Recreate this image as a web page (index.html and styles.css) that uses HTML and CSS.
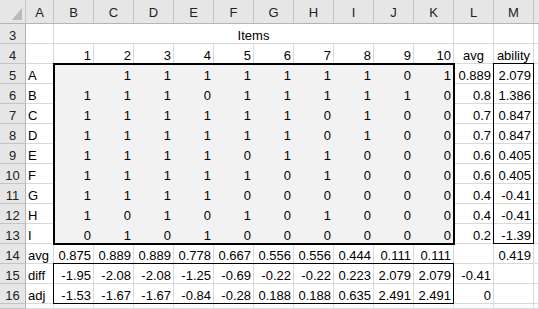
FILE: index.html
```html
<!DOCTYPE html>
<html>
<head>
<meta charset="utf-8">
<link rel="stylesheet" href="styles.css">
</head>
<body>
<div class="sheet">
  <div class="row hdr">
    <div class="corner"><svg class="tri" width="10" height="12" viewBox="0 0 10 12"><polygon points="10,0 10,12 0,12" fill="#b9b9b9"/></svg></div>
    <div class="ch">A</div><div class="ch">B</div><div class="ch">C</div><div class="ch">D</div><div class="ch">E</div><div class="ch">F</div><div class="ch">G</div><div class="ch">H</div><div class="ch">I</div><div class="ch">J</div><div class="ch">K</div><div class="ch">L</div><div class="ch">M</div><div class="ch last"></div>
  </div>
  <div class="row">
    <div class="rh">3</div><div class="c"></div><div class="c merged">Items</div><div class="c"></div><div class="c"></div><div class="c"></div>
  </div>
  <div class="row">
    <div class="rh">4</div><div class="c"></div><div class="c n">1</div><div class="c n">2</div><div class="c n">3</div><div class="c n">4</div><div class="c n">5</div><div class="c n">6</div><div class="c n">7</div><div class="c n">8</div><div class="c n">9</div><div class="c n">10</div><div class="c ctr">avg</div><div class="c ctr">ability</div><div class="c"></div>
  </div>
  <div class="row">
    <div class="rh">5</div><div class="c t">A</div><div class="c f n"></div><div class="c f n">1</div><div class="c f n">1</div><div class="c f n">1</div><div class="c f n">1</div><div class="c f n">1</div><div class="c f n">1</div><div class="c f n">1</div><div class="c f n">0</div><div class="c f n">1</div><div class="c n">0.889</div><div class="c n">2.079</div><div class="c"></div>
  </div>
  <div class="row">
    <div class="rh">6</div><div class="c t">B</div><div class="c f n">1</div><div class="c f n">1</div><div class="c f n">1</div><div class="c f n">0</div><div class="c f n">1</div><div class="c f n">1</div><div class="c f n">1</div><div class="c f n">1</div><div class="c f n">1</div><div class="c f n">0</div><div class="c n">0.8</div><div class="c n">1.386</div><div class="c"></div>
  </div>
  <div class="row">
    <div class="rh">7</div><div class="c t">C</div><div class="c f n">1</div><div class="c f n">1</div><div class="c f n">1</div><div class="c f n">1</div><div class="c f n">1</div><div class="c f n">1</div><div class="c f n">0</div><div class="c f n">1</div><div class="c f n">0</div><div class="c f n">0</div><div class="c n">0.7</div><div class="c n">0.847</div><div class="c"></div>
  </div>
  <div class="row">
    <div class="rh">8</div><div class="c t">D</div><div class="c f n">1</div><div class="c f n">1</div><div class="c f n">1</div><div class="c f n">1</div><div class="c f n">1</div><div class="c f n">1</div><div class="c f n">0</div><div class="c f n">1</div><div class="c f n">0</div><div class="c f n">0</div><div class="c n">0.7</div><div class="c n">0.847</div><div class="c"></div>
  </div>
  <div class="row">
    <div class="rh">9</div><div class="c t">E</div><div class="c f n">1</div><div class="c f n">1</div><div class="c f n">1</div><div class="c f n">1</div><div class="c f n">0</div><div class="c f n">1</div><div class="c f n">1</div><div class="c f n">0</div><div class="c f n">0</div><div class="c f n">0</div><div class="c n">0.6</div><div class="c n">0.405</div><div class="c"></div>
  </div>
  <div class="row">
    <div class="rh">10</div><div class="c t">F</div><div class="c f n">1</div><div class="c f n">1</div><div class="c f n">1</div><div class="c f n">1</div><div class="c f n">1</div><div class="c f n">0</div><div class="c f n">1</div><div class="c f n">0</div><div class="c f n">0</div><div class="c f n">0</div><div class="c n">0.6</div><div class="c n">0.405</div><div class="c"></div>
  </div>
  <div class="row">
    <div class="rh">11</div><div class="c t">G</div><div class="c f n">1</div><div class="c f n">1</div><div class="c f n">1</div><div class="c f n">1</div><div class="c f n">0</div><div class="c f n">0</div><div class="c f n">0</div><div class="c f n">0</div><div class="c f n">0</div><div class="c f n">0</div><div class="c n">0.4</div><div class="c n">-0.41</div><div class="c"></div>
  </div>
  <div class="row">
    <div class="rh">12</div><div class="c t">H</div><div class="c f n">1</div><div class="c f n">0</div><div class="c f n">1</div><div class="c f n">0</div><div class="c f n">1</div><div class="c f n">0</div><div class="c f n">1</div><div class="c f n">0</div><div class="c f n">0</div><div class="c f n">0</div><div class="c n">0.4</div><div class="c n">-0.41</div><div class="c"></div>
  </div>
  <div class="row">
    <div class="rh">13</div><div class="c t">I</div><div class="c f n">0</div><div class="c f n">1</div><div class="c f n">0</div><div class="c f n">1</div><div class="c f n">0</div><div class="c f n">0</div><div class="c f n">0</div><div class="c f n">0</div><div class="c f n">0</div><div class="c f n">0</div><div class="c n">0.2</div><div class="c n">-1.39</div><div class="c"></div>
  </div>
  <div class="row">
    <div class="rh">14</div><div class="c t">avg</div><div class="c n">0.875</div><div class="c n">0.889</div><div class="c n">0.889</div><div class="c n">0.778</div><div class="c n">0.667</div><div class="c n">0.556</div><div class="c n">0.556</div><div class="c n">0.444</div><div class="c n">0.111</div><div class="c n">0.111</div><div class="c"></div><div class="c n">0.419</div><div class="c"></div>
  </div>
  <div class="row">
    <div class="rh">15</div><div class="c t">diff</div><div class="c n">-1.95</div><div class="c n">-2.08</div><div class="c n">-2.08</div><div class="c n">-1.25</div><div class="c n">-0.69</div><div class="c n">-0.22</div><div class="c n">-0.22</div><div class="c n">0.223</div><div class="c n">2.079</div><div class="c n">2.079</div><div class="c n">-0.41</div><div class="c"></div><div class="c"></div>
  </div>
  <div class="row">
    <div class="rh">16</div><div class="c t">adj</div><div class="c n">-1.53</div><div class="c n">-1.67</div><div class="c n">-1.67</div><div class="c n">-0.84</div><div class="c n">-0.28</div><div class="c n">0.188</div><div class="c n">0.188</div><div class="c n">0.635</div><div class="c n">2.491</div><div class="c n">2.491</div><div class="c n">0</div><div class="c"></div><div class="c"></div>
  </div>
  <div class="row">
    <div class="rh"></div><div class="c"></div><div class="c"></div><div class="c"></div><div class="c"></div><div class="c"></div><div class="c"></div><div class="c"></div><div class="c"></div><div class="c"></div><div class="c"></div><div class="c"></div><div class="c"></div><div class="c"></div><div class="c"></div>
  </div>

  <div class="box thick"></div>
  <div class="box ability"></div>
  <div class="box adjbox"></div>
</div>
</body>
</html>
```
FILE: styles.css
```css
html, body {
  margin: 0;
  padding: 0;
  background: #fff;
  overflow: hidden;
}
body {
  width: 539px;
  height: 309px;
  font-family: "Liberation Sans", Arial, sans-serif;
  font-size: 13px;
  color: #000;
}
.sheet {
  position: relative;
  display: grid;
  grid-template-columns: 26px 28px repeat(10, 40px) 40px 40px 1fr;
  grid-template-rows: 24px repeat(14, 20px) 1fr;
  width: 539px;
  height: 309px;
}
.row {
  display: contents;
}
.c, .rh, .ch, .corner {
  box-sizing: border-box;
  border-right: 1px solid #d9d9d9;
  border-bottom: 1px solid #d9d9d9;
  display: flex;
  align-items: flex-end;
  line-height: 15px;
  padding: 0 2px 0 2px;
  white-space: nowrap;
  overflow: hidden;
}
.n { justify-content: flex-end; }
.t { justify-content: flex-start; }
.ctr { justify-content: center; }
.merged {
  grid-column: span 10;
  justify-content: center;
}
.f {
  background: #f2f2f2;
  border-color: #f2f2f2;
}
.hdr > div {
  background: #e6e6e6;
  border-right: 1px solid #c4c4c4;
  border-bottom: 1px solid #b4b4b4;
  color: #222;
}
.ch {
  justify-content: center;
  padding-bottom: 3px;
}
.hdr > .last { border-right: none; }
.corner {
  position: relative;
  justify-content: flex-end;
  padding: 0 3px 3px 0;
}
.tri { display: block; }
.rh {
  background: #e6e6e6;
  border-right: 1px solid #b4b4b4;
  border-bottom: 1px solid #c4c4c4;
  justify-content: center;
  color: #222;
  padding: 0;
}
.box {
  position: absolute;
  pointer-events: none;
  box-sizing: border-box;
}
.thick {
  grid-column: 3 / 13;
  grid-row: 4 / 13;
  top: -1px;
  left: -1px;
  right: -1px;
  bottom: -1px;
  border: 2px solid #000;
}
.ability {
  grid-column: 14 / 15;
  grid-row: 4 / 13;
  top: -1px;
  left: -1px;
  right: 0;
  bottom: 0;
  border: 1px solid #000;
}
.adjbox {
  grid-column: 3 / 13;
  grid-row: 14 / 16;
  top: -1px;
  left: -1px;
  right: 0;
  bottom: 0;
  border: 1px solid #000;
}
```
